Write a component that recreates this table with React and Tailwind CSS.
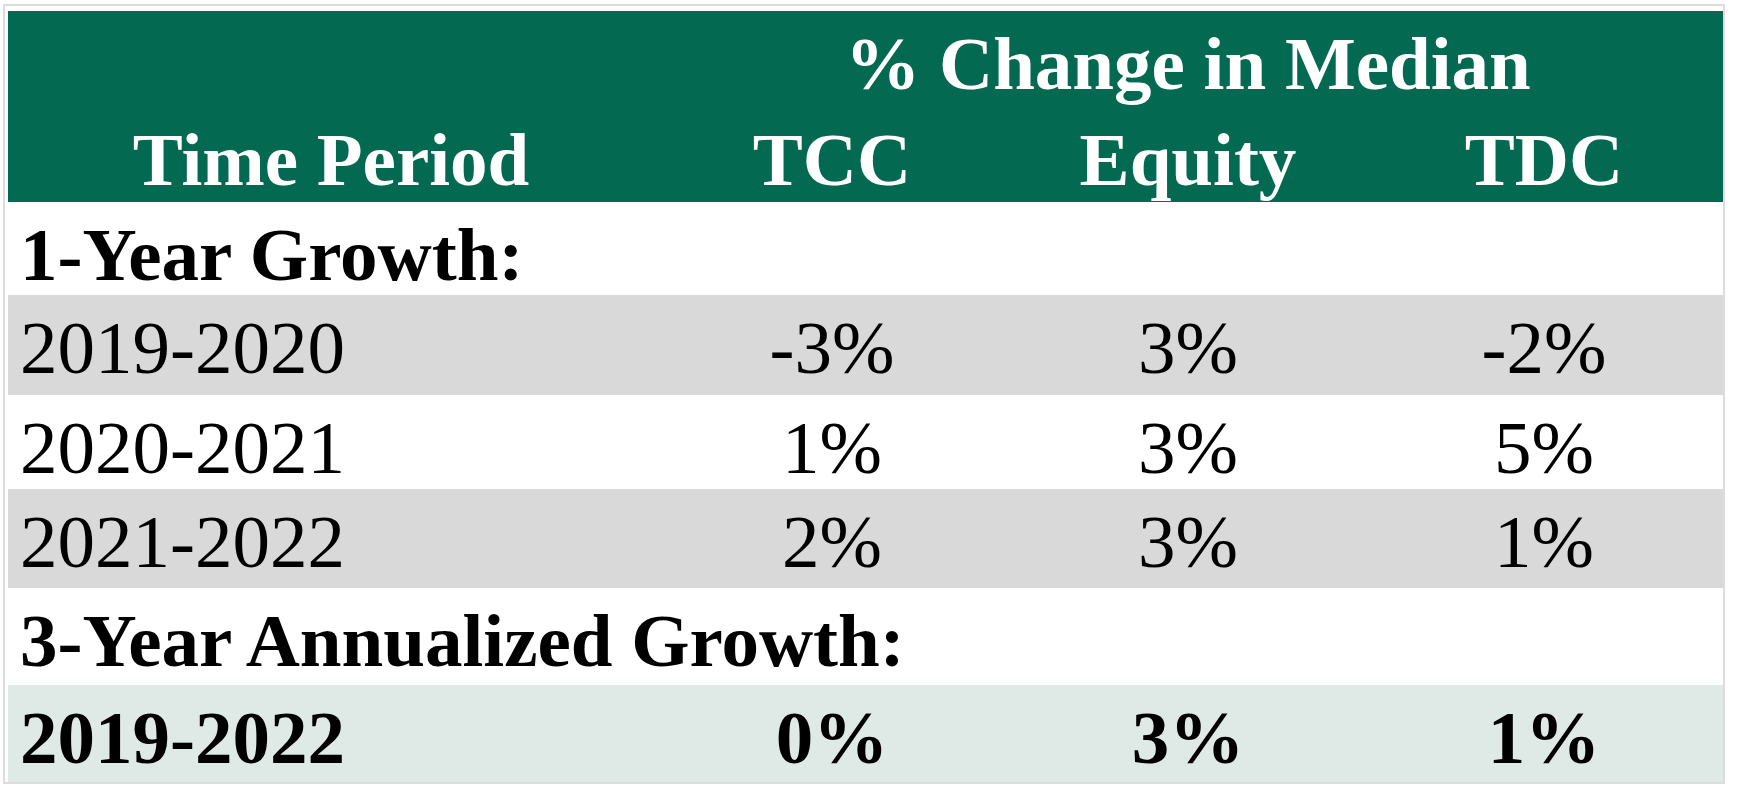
import React from "react";

const rows = [
  { label: "2019-2020", tcc: "-3%", equity: "3%", tdc: "-2%", bg: "bg-[#d9d9d9]", h: "h-[100px]" },
  { label: "2020-2021", tcc: "1%", equity: "3%", tdc: "5%", bg: "bg-white", h: "h-[94px]" },
  { label: "2021-2022", tcc: "2%", equity: "3%", tdc: "1%", bg: "bg-[#d9d9d9]", h: "h-[99px]" },
];

const cols = "grid grid-cols-[646px_356px_356px_356px]";

function DataRow({ row, bold }) {
  return (
    <div className={`${cols} ${row.bg} ${row.h} pt-[11px] leading-[83px] text-black ${bold ? "font-bold" : ""}`}>
      <div className="pl-[12px]">{row.label}</div>
      <div className="text-center">{row.tcc}</div>
      <div className="text-center">{row.equity}</div>
      <div className="text-center">{row.tdc}</div>
    </div>
  );
}

export default function App() {
  return (
    <div className="w-[1740px] h-[797px] bg-white font-['Liberation_Serif',serif] text-[75px]">
      <div className="ml-[3px] mt-[4px] w-[1722px] border-2 border-[#dcdcdc] pl-[3px] pt-[5px]">
        {/* header */}
        <div className={`${cols} bg-[#036951] text-white font-bold h-[191px] leading-[83px]`}>
          <div className="row-start-2 text-center pt-[11px]">Time Period</div>
          <div className="col-start-2 col-span-3 row-start-1 text-center pt-[11px]">% Change in Median</div>
          <div className="col-start-2 row-start-2 text-center pt-[11px]">TCC</div>
          <div className="col-start-3 row-start-2 text-center pt-[11px]">Equity</div>
          <div className="col-start-4 row-start-2 text-center pt-[11px]">TDC</div>
        </div>

        <div className="h-[93px] pt-[11px] pl-[12px] leading-[83px] font-bold text-black bg-white">1-Year Growth:</div>

        {rows.map((r) => (
          <DataRow key={r.label} row={r} />
        ))}

        <div className="h-[97px] pt-[11px] pl-[12px] leading-[83px] font-bold text-black bg-white">3-Year Annualized Growth:</div>

        <DataRow
          bold
          row={{ label: "2019-2022", tcc: "0%", equity: "3%", tdc: "1%", bg: "bg-[#dfeae6]", h: "h-[97px]" }}
        />
      </div>
    </div>
  );
}
